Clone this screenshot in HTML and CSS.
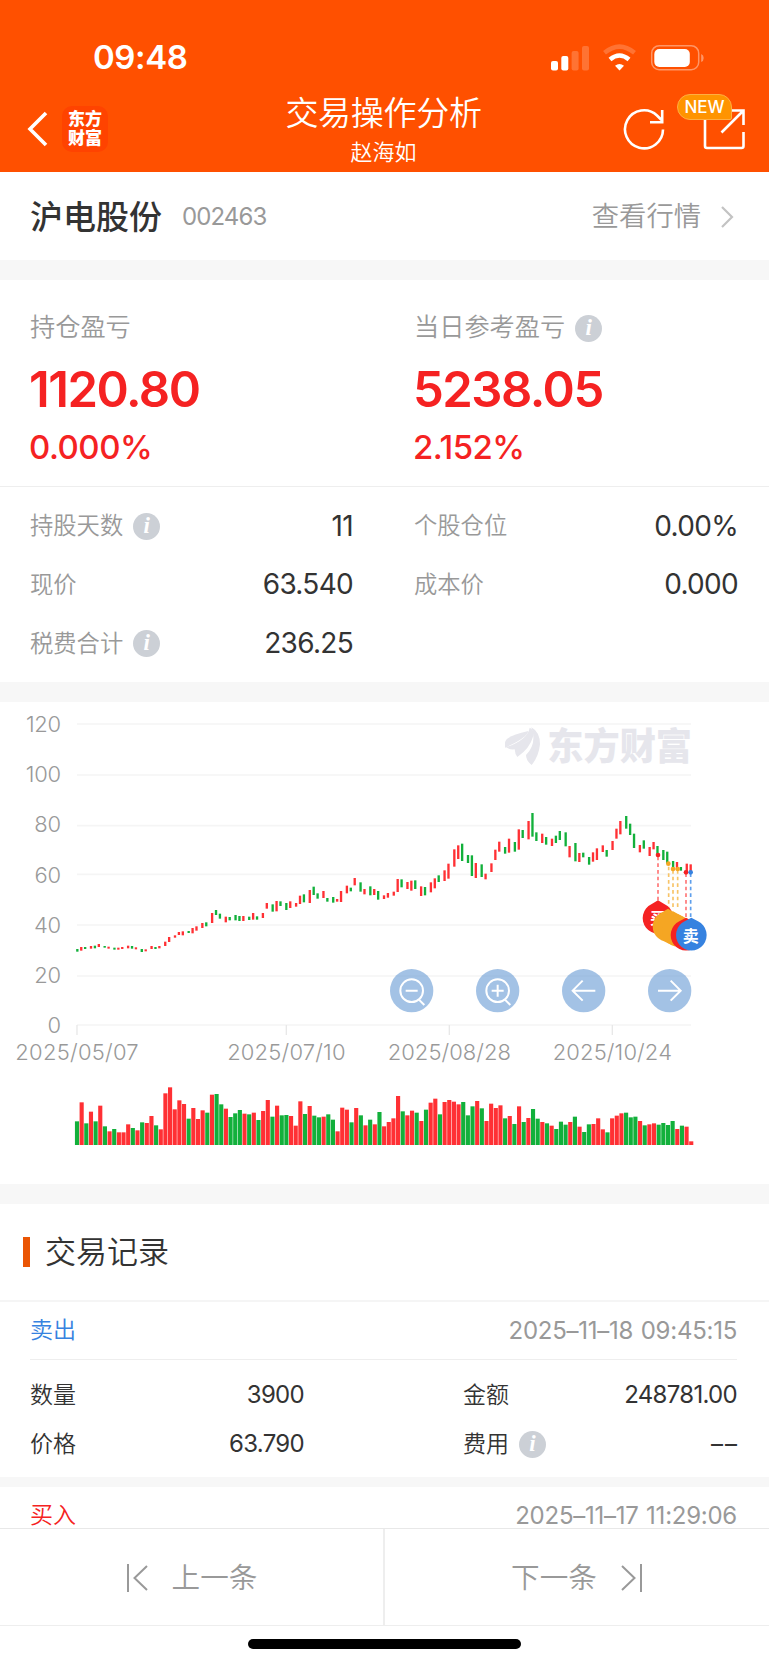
FILE: index.html
```html
<!DOCTYPE html>
<html lang="zh-CN">
  <head>
    <meta charset="UTF-8">
    <meta name="viewport" content="width=device-width, initial-scale=1.0">
    <title>交易操作分析</title>
    <link rel="stylesheet" href="styles.css">
  </head>
  <body>
    <header>
      <div class="status-bar">
        <span class="time">09:48</span>
        <svg class="status-icons" width="156" height="28" viewBox="0 0 156 28">
          <g fill="#fff">
            <rect x="1" y="17" width="7" height="9.5" rx="2"/>
            <rect x="11.3" y="12" width="7" height="14.5" rx="2"/>
            <rect x="21.6" y="7" width="7" height="19.5" rx="2" opacity=".2"/>
            <rect x="32" y="2" width="7" height="24.5" rx="2" opacity=".2"/>
            <path d="M69.500 26.500l-4.500-4.700q4.500-3.400 9 0z"/>
          </g>
          <path d="M54.500 8.800Q69.500-3.500 84.500 8.800" fill="none" stroke="#fff" stroke-width="4.500" opacity=".2"/>
          <path d="M60 15.500Q69.500 7.500 79 15.500" fill="none" stroke="#fff" stroke-width="4.500"/>
          <rect x="101.700" y="1.700" width="47" height="24" rx="7.500" fill="none" stroke="#fff" stroke-width="1.500" opacity=".4"/>
          <rect x="104.300" y="5" width="35.500" height="18" rx="5" fill="#fff"/>
          <path d="M151.200 10q2.500 1 2.500 4t-2.500 4z" fill="#fff" opacity=".4"/>
        </svg>
      </div>
      <div class="nav-bar">
        <div class="nav-left">
          <svg width="22" height="36" viewBox="0 0 22 36"><path d="M19 2L3 18l16 16" fill="none" stroke="#fff" stroke-width="3.600"/></svg>
          <div class="logo"><span>东方</span><span>财富</span></div>
        </div>
        <div class="nav-title">
          <h1>交易操作分析</h1>
          <p>赵海如</p>
        </div>
        <div class="nav-right">
          <svg width="44" height="44" viewBox="0 0 44 44" fill="none" stroke="#fff" stroke-width="2.600"><path d="M41 22.500A19 19 0 1 1 35 8.500l4.500 4.500M40.200 3v12.300H28"/></svg>
          <div class="share">
            <svg width="44" height="44" viewBox="0 0 44 44" fill="none" stroke="#fff" stroke-width="2.600"><path d="M3 11v28q0 2 2 2h34.500q2 0 2-2V25M28 3.500h13.500V18M41 4L19.500 25.500"/></svg>
            <span class="new">NEW</span>
          </div>
        </div>
      </div>
    </header>
    <main>
      <section class="stock">
        <h2>沪电股份</h2>
        <span class="code">002463</span>
        <a class="quote">查看行情</a>
        <svg width="14" height="24" viewBox="0 0 14 24"><path d="M2 2l10 10L2 22" fill="none" stroke="#c3c3c3" stroke-width="2.200"/></svg>
      </section>
      <section class="profit">
        <div>
          <div class="label">持仓盈亏</div>
          <div class="amount">1120.80</div>
          <div class="percent">0.000%</div>
        </div>
        <div>
          <div class="label">当日参考盈亏<i class="info">i</i></div>
          <div class="amount">5238.05</div>
          <div class="percent">2.152%</div>
        </div>
      </section>
      <section class="detail">
        <div><span>持股天数<i class="info">i</i></span><b>11</b></div>
        <div><span>个股仓位</span><b>0.00%</b></div>
        <div><span>现价</span><b>63.540</b></div>
        <div><span>成本价</span><b>0.000</b></div>
        <div><span>税费合计<i class="info">i</i></span><b>236.25</b></div>
      </section>
      <section class="chart">
        <svg id="chart" width="769" height="482" viewBox="0 6 2307 1446">
          <g id="grid"></g>
          <g class="brand" fill="#e6e6ec">
            <path d="M1515 127Q1519 107 1585 93Q1581 114 1515 143z"/>
            <path d="M1518 142Q1583 119 1589 83Q1604 90 1599 110Q1590 144 1552 171Q1545 163 1544 148Q1530 150 1518 142z"/>
            <path d="M1594 82Q1620 96 1620 133Q1616 170 1595 195Q1578 182 1578 165Q1612 130 1594 82z"/>
            <text x="1642" y="180" textLength="434" lengthAdjust="spacingAndGlyphs">东方财富</text>
          </g>
          <g id="candles"></g>
          <g id="volume"></g>
          <g id="dates" class="axis" text-anchor="middle"></g>
          <g fill="none" stroke-width="5">
            <path d="M1974 470v132" class="dash" stroke="#f77"/>
            <path d="M2006 500v130M2019 510v120M2033 510v120" class="dash" stroke="#f8c468"/>
            <path d="M2058 520v134" class="dash" stroke="#f77"/>
            <path d="M2072 520v134" class="dash" stroke="#5f9fec"/>
          </g>
          <g fill="#f52222">
            <circle cx="1974" cy="465" r="7"/>
            <circle cx="2058" cy="517" r="7"/>
          </g>
          <g fill="#f5a623">
            <circle cx="2005" cy="491" r="7"/>
            <circle cx="2019" cy="507" r="7"/>
            <circle cx="2033" cy="507" r="7"/>
          </g>
          <circle cx="2072" cy="517" r="7" fill="#3682e0"/>
          <g class="pin">
            <path fill="#f52222" d="M1974 601l20 12a46 46 0 1 1-40 0z"/>
            <text x="1974" y="672">买</text>
            <path fill="#f5a623" d="M2004 626l20 12a46 46 0 1 1-40 0z"/>
            <path fill="#f5a623" d="M2019 634l30 16a46 46 0 1 1-53 0z"/>
            <path fill="#f5a623" d="M2033 642l20 10a46 46 0 1 1-40 0z"/>
            <path fill="#f52222" d="M2058 653l20 11a46 46 0 1 1-40 0z"/>
            <path fill="#3682e0" d="M2074 653l20 11a46 46 0 1 1-40 0z"/>
            <text x="2072" y="725">卖</text>
          </g>
          <g fill="#6699d3" fill-opacity=".6">
            <circle cx="1235" cy="872" r="65"/>
            <circle cx="1493" cy="872" r="65"/>
            <circle cx="1751" cy="872" r="65"/>
            <circle cx="2009" cy="872" r="65"/>
          </g>
          <g fill="none" stroke="#fff" stroke-width="6">
            <circle cx="1235" cy="872" r="34"/>
            <path d="M1217 872h36M1256 898l17 17"/>
            <circle cx="1493" cy="872" r="34"/>
            <path d="M1475 872h36M1493 854v36M1514 898l17 17"/>
            <path d="M1786 872h-68M1748 842l-30 30 30 30"/>
            <path d="M1974 872h68M2012 842l30 30-30 30"/>
          </g>
        </svg>
      </section>
      <section class="records">
        <h3>交易记录</h3>
        <div class="record">
          <div class="record-head"><span class="sell">卖出</span><time>2025–11–18 09:45:15</time></div>
          <div class="record-body">
            <div><span>数量</span><b>3900</b></div>
            <div><span>金额</span><b>248781.00</b></div>
            <div><span>价格</span><b>63.790</b></div>
            <div><span>费用<i class="info">i</i></span><b class="empty">––</b></div>
          </div>
        </div>
        <div class="record">
          <div class="record-head"><span class="buy">买入</span><time>2025–11–17 11:29:06</time></div>
        </div>
      </section>
    </main>
    <footer>
      <div class="pager">
        <a><svg width="22" height="28" viewBox="0 0 22 28"><path d="M2 0v28M21 2L8.500 14 21 26"/></svg>上一条</a>
        <a>下一条<svg width="22" height="28" viewBox="0 0 22 28"><path d="M20 0v28M1 2l12.500 12L1 26"/></svg></a>
      </div>
      <div class="home"></div>
    </footer>
    <script src="chart.js"></script>
  </body>
</html>
```
FILE: styles.css
```css
* {
  box-sizing: border-box;
  margin: 0;
  padding: 0;
}

body {
  width: 769px;
  height: 1665px;
  display: flex;
  flex-direction: column;
  overflow: hidden;
  background: #fff;
  color: #333;
  font-family: Inter, "Noto Sans CJK SC", sans-serif;
  font-weight: 350;
  line-height: 1.1;
}

b,
time,
.code {
  font-weight: 400;
}

header {
  height: 172px;
  background: #ff5000;
  color: #fff;
}

.status-bar {
  height: 86px;
  padding: 29px 63px 0 93px;
  display: flex;
  justify-content: space-between;
  align-items: center;
}

.time {
  font-size: 33px;
  font-weight: 600;
  letter-spacing: -0.4px;
}

.nav-bar {
  height: 86px;
  padding: 0 23px 0 24px;
  display: grid;
  grid-template-columns: 1fr auto 1fr;
  align-items: center;
}

.nav-left {
  padding-left: 3px;
  display: flex;
  align-items: center;
  gap: 13px;
}

.logo {
  width: 46px;
  height: 46px;
  border-radius: 10px;
  background: #ff4300;
  display: flex;
  flex-direction: column;
  align-items: center;
  justify-content: center;
  font-size: 17px;
  font-weight: 900;
  line-height: 19px;
}

.nav-title {
  text-align: center;
}

h1 {
  font-size: 33px;
  line-height: 44px;
  font-weight: 350;
  letter-spacing: -0.3px;
  margin: 3px 0 0 -3px;
}

.nav-title p {
  font-size: 22px;
  line-height: 36px;
  margin: -1px 0 0 -3px;
}

.nav-right {
  display: flex;
  justify-content: flex-end;
  gap: 36px;
}

.share {
  position: relative;
  height: 44px;
}

.new {
  position: absolute;
  left: -25px;
  top: -13px;
  width: 55px;
  height: 26px;
  border: 1px solid #ffae42;
  border-radius: 13px 13px 2px 13px;
  background: #ff9400;
  font-size: 17px;
  font-weight: 450;
  line-height: 25px;
  text-align: center;
}

.stock {
  height: 88px;
  padding: 2px 35px 0 30px;
  display: flex;
  align-items: center;
}

h2 {
  font-size: 33px;
  font-weight: 500;
}

.code {
  margin-left: 20px;
  color: #999;
  font-size: 24px;
  letter-spacing: -0.9px;
}

.quote {
  margin-left: auto;
  margin-right: 19px;
  color: #999;
  font-size: 27.300px;
}

.profit {
  height: 227px;
  padding: 26px 0 0 30px;
  border-top: 20px solid #f7f7f7;
  border-bottom: 1px solid #eee;
  display: grid;
  grid-template-columns: 384px 1fr;
}

.label {
  height: 44px;
  color: #999;
  font-size: 25.200px;
  display: flex;
  align-items: center;
}

.info {
  flex: none;
  display: inline-block;
  width: 27px;
  height: 27px;
  margin-left: 10px;
  border-radius: 50%;
  background: #ccd0d6;
  color: #fff;
  font: italic bold 23px/26px "Liberation Serif", serif;
  text-align: center;
}

.amount,
.percent {
  color: #f52222;
  margin-left: -1px;
}

.amount {
  font-size: 49px;
  line-height: 60px;
  margin-top: 10px;
  font-weight: 600;
  letter-spacing: -1.5px;
}

.percent {
  font-size: 33px;
  line-height: 40px;
  margin-top: 7px;
  font-weight: 500;
  letter-spacing: -0.5px;
}

.detail {
  height: 195px;
  padding: 10px 31px 0 30px;
  display: grid;
  grid-template-columns: 323px 324px;
  grid-auto-rows: 58.6px;
  column-gap: 61px;
}

.detail div,
.detail span {
  display: flex;
  align-items: center;
}

.detail div {
  justify-content: space-between;
}

.detail span {
  color: #999;
  font-size: 23.300px;
}

.detail b {
  font-size: 28px;
  letter-spacing: -0.7px;
}

.chart {
  height: 502px;
  border-top: 20px solid #f7f7f7;
}

.chart svg {
  display: block;
}

.axis {
  fill: #999;
  font-size: 66px;
}

.brand text {
  font-size: 112px;
  font-weight: 900;
}

.dash {
  stroke-dasharray: 11 9;
}

.pin text {
  fill: #fff;
  font-size: 48px;
  font-weight: 700;
  text-anchor: middle;
}

.records {
  border-top: 20px solid #f7f7f7;
}

h3 {
  height: 98px;
  padding-left: 23px;
  border-bottom: 2px solid #f5f5f5;
  display: flex;
  align-items: center;
  font-size: 31px;
  font-weight: 350;
}

h3::before {
  content: "";
  width: 7px;
  height: 30px;
  margin-right: 15px;
  background: #ea5504;
}

.record {
  padding: 0 32px 0 30px;
  border-bottom: 10px solid #f7f7f7;
}

.record-head {
  height: 58px;
  padding-top: 1px;
  border-bottom: 1px solid #eee;
  display: flex;
  justify-content: space-between;
  align-items: center;
  font-size: 23px;
}

.sell {
  color: #3682e0;
}

.buy {
  color: #f52222;
}

time {
  color: #999;
  font-size: 24px;
  letter-spacing: -0.25px;
  word-spacing: 1px;
}

.record-body {
  height: 117px;
  padding-top: 11px;
  display: grid;
  grid-template-columns: 274px 274px;
  grid-auto-rows: 49px;
  justify-content: space-between;
}

.record-body div,
.record-body span {
  display: flex;
  align-items: center;
  font-size: 23px;
}

.record-body div {
  justify-content: space-between;
}

.record-body b {
  font-size: 24px;
  letter-spacing: -0.7px;
}

.record-body .empty {
  letter-spacing: 2px;
  margin-right: -2px;
}

footer {
  flex: none;
  height: 137px;
  background: #fff;
}

main {
  flex: 1;
  min-height: 0;
  overflow: hidden;
}

.pager {
  height: 98px;
  border-top: 1px solid #e8e8e8;
  border-bottom: 1px solid #eee;
  display: grid;
  grid-template-columns: 383px 1fr;
}

.pager a {
  display: flex;
  align-items: center;
  justify-content: center;
  gap: 24px;
  padding-top: 1px;
  color: #999;
  font-size: 28.600px;
}

.pager a + a {
  border-left: 2px solid #eee;
}

.pager path {
  fill: none;
  stroke: #999;
  stroke-width: 2;
}

.home {
  width: 273px;
  height: 10px;
  margin: 13px auto 0;
  border-radius: 5px;
  background: #000;
}
```
FILE: chart.js
```js
// each day: color, high, low, top of the volume bar
var days = `g747,755,334 r741,752,277 g741,747,340 r738,746,305 g737,745,334 r732,741,287 g738,743,349 r740,746,364
g743,749,357 r743,749,367 r741,747,367 r737,745,343 g738,746,354 r742,748,361 g747,756,337 r748,754,339
r738,747,318 g741,747,346 r738,745,358 r725,738,250 r711,726,232 r706,713,298 r696,705,271 r694,706,282
g693,699,326 r684,700,294 r679,692,327 r669,684,301 g667,679,308 r639,669,254 g630,645,252 g641,656,283
r650,667,296 g651,661,321 g645,661,310 g648,663,300 r648,663,311 g650,660,313 r639,659,308 g649,659,330
r639,654,303 r609,626,270 g613,635,320 r603,634,287 g604,618,316 g609,630,315 r604,624,318 r609,620,347
r587,612,274 g583,607,312 r570,609,288 g560,585,317 g580,596,322 r573,594,320 g594,605,313 g591,608,329
r597,605,364 r573,606,293 r557,580,299 g563,574,337 r534,556,294 g547,575,316 r567,583,346 g559,586,329
r567,585,343 g573,599,306 r586,597,349 r579,593,336 r575,587,325 r537,576,258 g538,562,304 r546,567,316
r542,572,302 g541,567,308 r559,588,333 g561,586,299 r547,577,278 r535,565,266 g526,546,313 r511,543,276
r491,536,270 r448,500,275 r436,477,283 g431,483,276 g465,489,316 g466,528,289 r489,534,273 g493,531,295
r521,538,333 r490,516,281 r449,480,294 r425,455,286 g441,461,325 r416,458,318 g426,455,342 r388,449,289
g390,414,336 r363,418,324 g339,410,297 g397,423,326 r401,429,336 g411,434,340 r416,438,347 g407,429,357
g393,420,335 g397,439,344 r438,472,336 g429,484,320 r459,486,350 g458,472,366 g471,494,343 r457,485,342
r445,480,325 r436,456,358 g450,470,367 r423,450,325 r386,416,317 r363,403,310 g348,386,308 g371,405,322
g401,444,320 r435,457,333 g421,446,346 r441,468,343 r426,448,340 g438,465,344 g450,480,339 g455,491,345
g483,505,333 r486,510,357 g501,512,347 r491,518,350 r493,516,394`.split(/\s+/);

var candles = "";
var volume = "";
days.forEach(function(day, i) {
  var color = day[0] === "r" ? "#ff3034" : "#12b03b";
  var v = day.slice(1).split(",").map(Number);
  var x = 232 + 5.86 * Math.floor(i * 2.3833);
  candles += `<rect x="${x - 3.5}" y="${v[0]}" width="7" height="${v[1] - v[0]}" fill="${color}"/>`;
  volume += `<rect x="${231 + 13.96 * i - 6.2}" y="${v[2] + 930}" width="12.4" height="${405 - v[2]}" fill="${color}"/>`;
});
document.getElementById("candles").innerHTML = candles;
document.getElementById("volume").innerHTML = volume;

var grid = "";
[72, 225, 377, 523, 675, 828, 975].forEach(function(y, i) {
  grid += `<path d="M231 ${y}H2073" stroke="#f5f5f5" stroke-width="5"/>`;
  grid += `<text class="axis" x="182" y="${72 + 150.7 * i + 24}" text-anchor="end" letter-spacing="-1">${120 - i * 20}</text>`;
});
document.getElementById("grid").innerHTML = grid;

var dates = "";
[[231, "2025/05/07", 370], [859, "2025/07/10", 355], [1348, "2025/08/28", 370], [1837, "2025/10/24", 358]].forEach(function(d) {
  dates += `<path d="M${d[0]} 975v30" stroke="#e8e8e8" stroke-width="4"/>`;
  dates += `<text x="${d[0]}" y="1080" textLength="${d[2]}">${d[1]}</text>`;
});
document.getElementById("dates").innerHTML = dates;
```
